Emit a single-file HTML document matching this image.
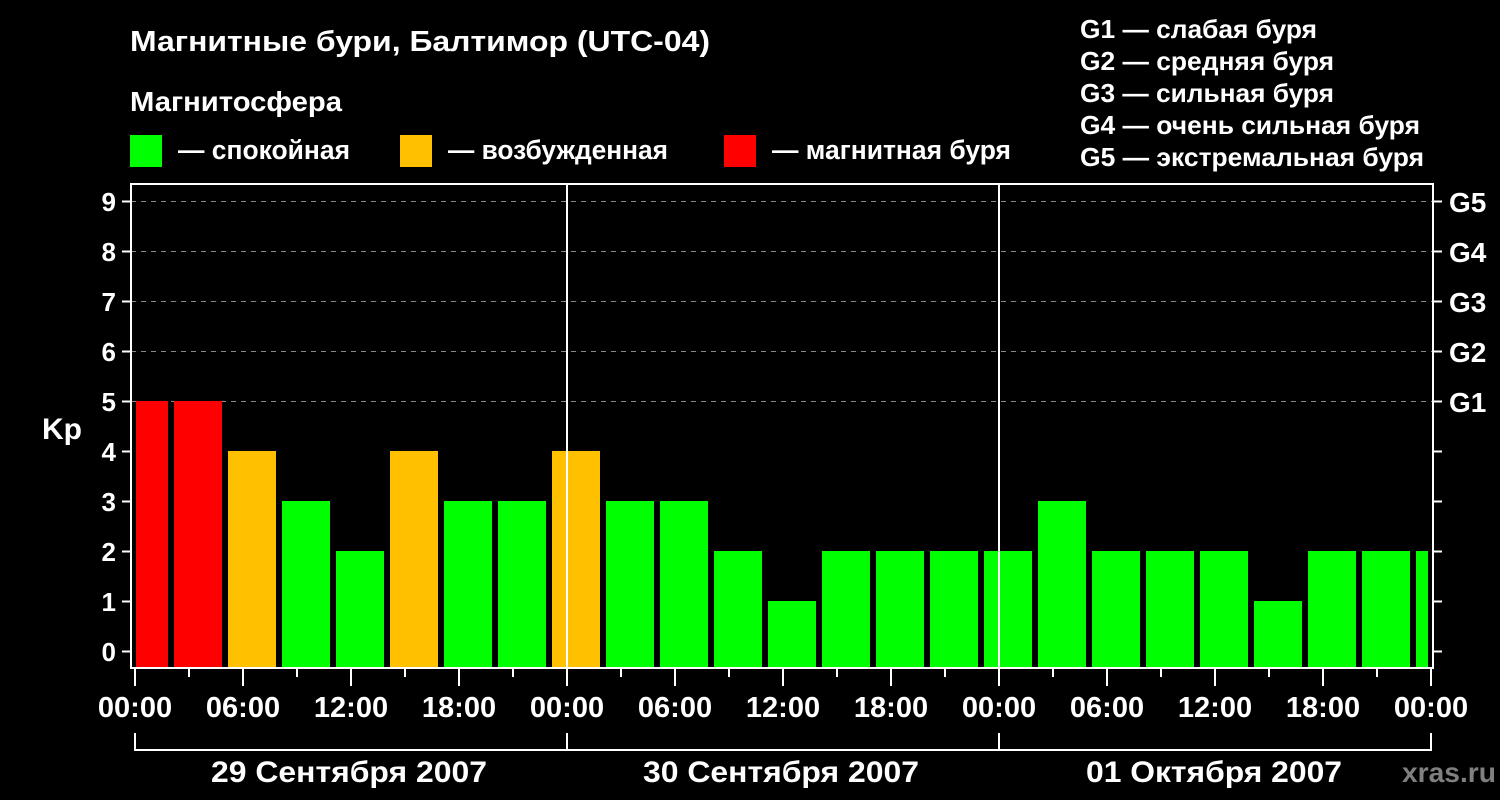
<!DOCTYPE html>
<html><head><meta charset="utf-8"><style>
html,body{margin:0;padding:0;background:#000;}
svg{display:block}
text{font-family:"Liberation Sans",Arial,sans-serif;font-weight:bold;fill:#fff}
</style></head><body>
<svg width="1500" height="800" viewBox="0 0 1500 800" xmlns="http://www.w3.org/2000/svg">
<rect width="1500" height="800" fill="#000"/>
<text x="130" y="51" font-size="29" textLength="580" lengthAdjust="spacingAndGlyphs">Магнитные бури, Балтимор (UTC-04)</text>
<text x="130" y="111" font-size="28" textLength="212" lengthAdjust="spacingAndGlyphs">Магнитосфера</text>
<rect x="130" y="135" width="32" height="32" fill="#00ff00"/>
<text x="178" y="159" font-size="27" textLength="172" lengthAdjust="spacingAndGlyphs">— спокойная</text>
<rect x="400" y="135" width="32" height="32" fill="#ffc000"/>
<text x="448" y="159" font-size="27" textLength="220" lengthAdjust="spacingAndGlyphs">— возбужденная</text>
<rect x="724" y="135" width="32" height="32" fill="#ff0000"/>
<text x="772" y="159" font-size="27" textLength="239" lengthAdjust="spacingAndGlyphs">— магнитная буря</text>
<g font-size="26">
<text x="1080" y="38" textLength="237" lengthAdjust="spacingAndGlyphs">G1 — слабая буря</text>
<text x="1080" y="70" textLength="254" lengthAdjust="spacingAndGlyphs">G2 — средняя буря</text>
<text x="1080" y="102" textLength="254" lengthAdjust="spacingAndGlyphs">G3 — сильная буря</text>
<text x="1080" y="134" textLength="340" lengthAdjust="spacingAndGlyphs">G4 — очень сильная буря</text>
<text x="1080" y="166" textLength="344" lengthAdjust="spacingAndGlyphs">G5 — экстремальная буря</text>
</g>
<g stroke="#888" stroke-width="1" stroke-dasharray="5,5">
<line x1="131" y1="201.5" x2="1433" y2="201.5"/>
<line x1="131" y1="251.5" x2="1433" y2="251.5"/>
<line x1="131" y1="301.5" x2="1433" y2="301.5"/>
<line x1="131" y1="351.5" x2="1433" y2="351.5"/>
<line x1="131" y1="401.5" x2="1433" y2="401.5"/>
</g>
<g>
<rect x="136" y="401" width="32" height="267" fill="#ff0000"/>
<rect x="174" y="401" width="48" height="267" fill="#ff0000"/>
<rect x="228" y="451" width="48" height="217" fill="#ffc000"/>
<rect x="282" y="501" width="48" height="167" fill="#00ff00"/>
<rect x="336" y="551" width="48" height="117" fill="#00ff00"/>
<rect x="390" y="451" width="48" height="217" fill="#ffc000"/>
<rect x="444" y="501" width="48" height="167" fill="#00ff00"/>
<rect x="498" y="501" width="48" height="167" fill="#00ff00"/>
<rect x="552" y="451" width="48" height="217" fill="#ffc000"/>
<rect x="606" y="501" width="48" height="167" fill="#00ff00"/>
<rect x="660" y="501" width="48" height="167" fill="#00ff00"/>
<rect x="714" y="551" width="48" height="117" fill="#00ff00"/>
<rect x="768" y="601" width="48" height="67" fill="#00ff00"/>
<rect x="822" y="551" width="48" height="117" fill="#00ff00"/>
<rect x="876" y="551" width="48" height="117" fill="#00ff00"/>
<rect x="930" y="551" width="48" height="117" fill="#00ff00"/>
<rect x="984" y="551" width="48" height="117" fill="#00ff00"/>
<rect x="1038" y="501" width="48" height="167" fill="#00ff00"/>
<rect x="1092" y="551" width="48" height="117" fill="#00ff00"/>
<rect x="1146" y="551" width="48" height="117" fill="#00ff00"/>
<rect x="1200" y="551" width="48" height="117" fill="#00ff00"/>
<rect x="1254" y="601" width="48" height="67" fill="#00ff00"/>
<rect x="1308" y="551" width="48" height="117" fill="#00ff00"/>
<rect x="1362" y="551" width="48" height="117" fill="#00ff00"/>
<rect x="1416" y="551" width="12" height="117" fill="#00ff00"/>
</g>
<g stroke="#fff" stroke-width="2" fill="none">
<rect x="131" y="184" width="1302" height="484"/>
<line x1="567" y1="184" x2="567" y2="668"/>
<line x1="999" y1="184" x2="999" y2="668"/>
<path d="M122 201.5H131M122 251.5H131M122 301.5H131M122 351.5H131M122 401.5H131M122 451.5H131M122 501.5H131M122 551.5H131M122 601.5H131M122 651.5H131"/>
<path d="M1433 201.5H1442M1433 251.5H1442M1433 301.5H1442M1433 351.5H1442M1433 401.5H1442M1433 451.5H1442M1433 501.5H1442M1433 551.5H1442M1433 601.5H1442M1433 651.5H1442"/>
<path d="M135 668V686M243 668V686M351 668V686M459 668V686M567 668V686M675 668V686M783 668V686M891 668V686M999 668V686M1107 668V686M1215 668V686M1323 668V686M1431 668V686"/>
<path d="M189 668V677M297 668V677M405 668V677M513 668V677M621 668V677M729 668V677M837 668V677M945 668V677M1053 668V677M1161 668V677M1269 668V677M1377 668V677"/>
<path d="M135 733V750H1431V733M567 733V750M999 733V750"/>
</g>
<g font-size="26" text-anchor="end">
<text x="116" y="211">9</text><text x="116" y="261">8</text><text x="116" y="311">7</text>
<text x="116" y="361">6</text><text x="116" y="411">5</text><text x="116" y="461">4</text>
<text x="116" y="511">3</text><text x="116" y="561">2</text><text x="116" y="611">1</text>
<text x="116" y="661">0</text>
</g>
<text x="42" y="439" font-size="30">Kp</text>
<g font-size="28">
<text x="1449" y="212">G5</text><text x="1449" y="262">G4</text><text x="1449" y="312">G3</text>
<text x="1449" y="362">G2</text><text x="1449" y="412">G1</text>
</g>
<g font-size="29" text-anchor="middle">
<text x="135" y="717">00:00</text><text x="243" y="717">06:00</text><text x="351" y="717">12:00</text>
<text x="459" y="717">18:00</text><text x="567" y="717">00:00</text><text x="675" y="717">06:00</text>
<text x="783" y="717">12:00</text><text x="891" y="717">18:00</text><text x="999" y="717">00:00</text>
<text x="1107" y="717">06:00</text><text x="1215" y="717">12:00</text><text x="1323" y="717">18:00</text>
<text x="1431" y="717">00:00</text>
</g>
<g font-size="30">
<text x="211" y="782" textLength="276" lengthAdjust="spacingAndGlyphs">29 Сентября 2007</text>
<text x="643" y="782" textLength="276" lengthAdjust="spacingAndGlyphs">30 Сентября 2007</text>
<text x="1086" y="782" textLength="256" lengthAdjust="spacingAndGlyphs">01 Октября 2007</text>
</g>
<text x="1402" y="782" font-size="28" style="fill:#808080" textLength="94" lengthAdjust="spacingAndGlyphs">xras.ru</text>
</svg>
</body></html>
